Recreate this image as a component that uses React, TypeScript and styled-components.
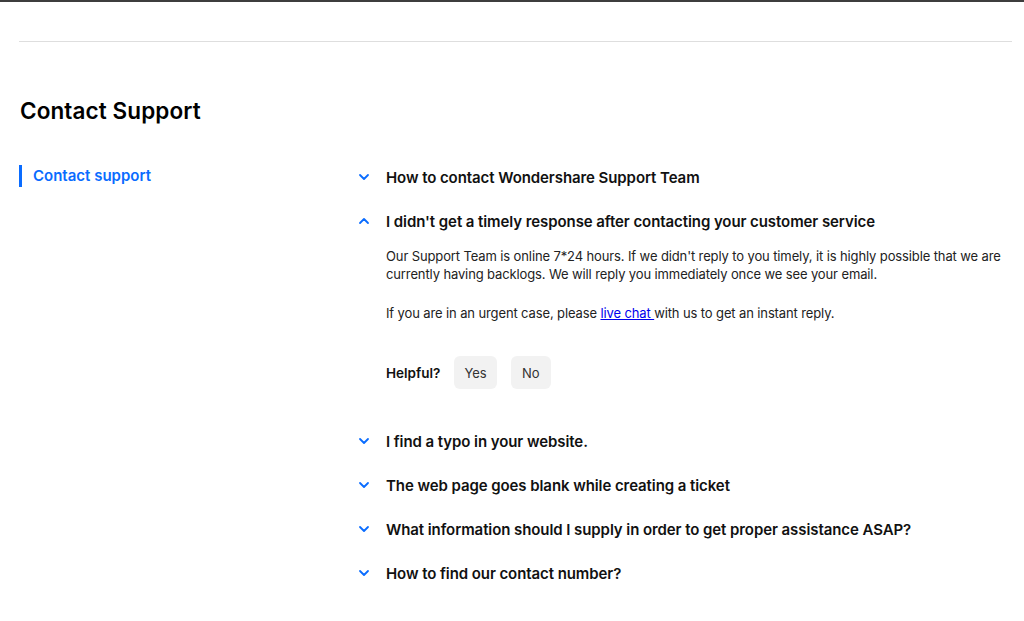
import React from "react";
import styled, { createGlobalStyle } from "styled-components";

const GlobalStyle = createGlobalStyle`
  body {
    margin: 0;
    background: #fff;
    font-family: Inter, "Noto Sans", sans-serif;
    color: #000;
  }
`;

const BLUE = "#0a6cff";

const faqs = [
  "How to contact Wondershare Support Team",
  "I didn't get a timely response after contacting your customer service",
  "I find a typo in your website.",
  "The web page goes blank while creating a ticket",
  "What information should I supply in order to get proper assistance ASAP?",
  "How to find our contact number?",
];

const Chevron = ({ up }: { up?: boolean }) => (
  <svg width="12" height="12" viewBox="0 0 12 12" fill="none">
    <path
      d={up ? "M2 8 L6 4 L10 8" : "M2 4 L6 8 L10 4"}
      stroke={BLUE}
      strokeWidth="1.8"
      strokeLinecap="round"
      strokeLinejoin="round"
    />
  </svg>
);

const App = () => {
  const open = 1;
  return (
    <>
      <GlobalStyle />
      <TopBar />
      <Page>
        <Divider />
        <Title>Contact Support</Title>
        <Layout>
          <Sidebar>
            <SideItem>Contact support</SideItem>
          </Sidebar>
          <Main>
            {faqs.map((q, i) => (
              <Item key={q}>
                <Question>
                  <IconWrap>
                    <Chevron up={i === open} />
                  </IconWrap>
                  {q}
                </Question>
                {i === open && (
                  <Answer>
                    <p>
                      Our Support Team is online 7*24 hours. If we didn't reply to you timely, it is
                      highly possible that we are currently having backlogs. We will reply you
                      immediately once we see your email.
                    </p>
                    <p>
                      If you are in an urgent case, please <a href="#">live chat </a>with us to get
                      an instant reply.
                    </p>
                    <Helpful>
                      <strong>Helpful?</strong>
                      <VoteButton>Yes</VoteButton>
                      <VoteButton>No</VoteButton>
                    </Helpful>
                  </Answer>
                )}
              </Item>
            ))}
          </Main>
        </Layout>
      </Page>
    </>
  );
};

export default App;

const TopBar = styled.div`
  height: 2px;
  background: #3d3d3d;
`;

const Page = styled.div`
  padding: 39px 12px 40px 19px;
`;

const Divider = styled.div`
  height: 1px;
  background: #dedede;
`;

const Title = styled.h1`
  margin: 55px 0 30px 1px;
  font-size: 22.5px;
  line-height: 28px;
  font-weight: 600;
  letter-spacing: 0.1px;
  color: #000;
`;

const Layout = styled.div`
  display: grid;
  grid-template-columns: 339px 1fr;
`;

const Sidebar = styled.div`
  padding-top: 10px;
`;

const SideItem = styled.div`
  border-left: 3px solid ${BLUE};
  padding-left: 11px;
  font-size: 15px;
  line-height: 22px;
  font-weight: 600;
  color: ${BLUE};
`;

const Main = styled.div`
  display: flex;
  flex-direction: column;
`;

const Item = styled.div``;

const Question = styled.div`
  display: flex;
  align-items: center;
  height: 44px;
  font-size: 15px;
  font-weight: 600;
  letter-spacing: -0.08px;
  color: #111;
`;

const IconWrap = styled.span`
  display: flex;
  width: 28px;
`;

const Answer = styled.div`
  padding: 4px 0 30px 28px;
  font-size: 13px;
  line-height: 18px;
  letter-spacing: -0.12px;
  color: #222;

  p {
    margin: 0 0 21px;
  }

  a {
    color: #0000ee;
  }
`;

const Helpful = styled.div`
  display: flex;
  align-items: center;
  gap: 14px;
  margin-top: 34px;

  strong {
    font-size: 13.5px;
    font-weight: 600;
    letter-spacing: 0;
    color: #111;
  }
`;

const VoteButton = styled.button`
  height: 33px;
  min-width: 40px;
  padding: 0 10px;
  border: none;
  border-radius: 6px;
  background: #f2f2f2;
  font-family: inherit;
  font-size: 13px;
  color: #333;
`;
